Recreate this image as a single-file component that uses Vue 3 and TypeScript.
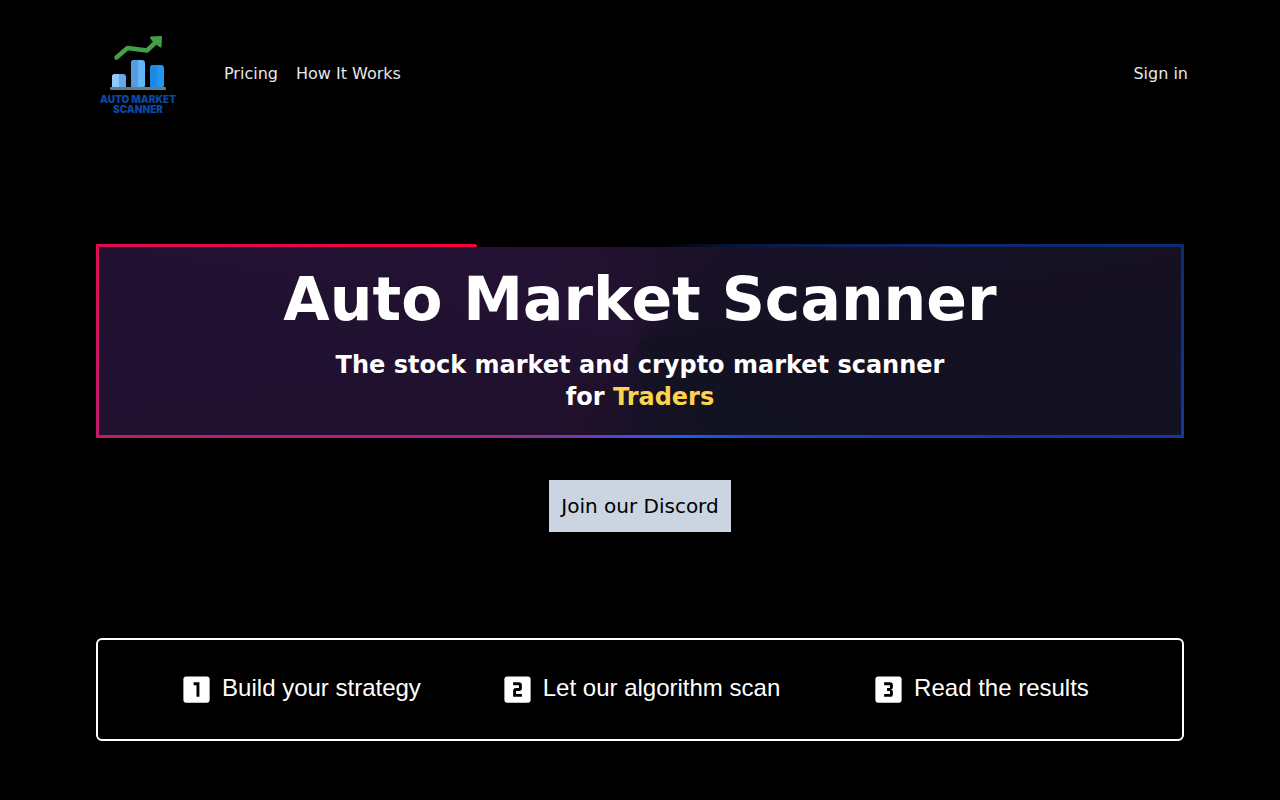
<script setup lang="ts">
interface Step {
  id: number
  label: string
  digit: string
}

const steps: Step[] = [
  { id: 1, label: 'Build your strategy', digit: 'M10 7h4v10h-2V9h-2z' },
  { id: 2, label: 'Let our algorithm scan', digit: 'M9 7h4a2 2 0 0 1 2 2v2a2 2 0 0 1-2 2h-2v2h4v2H9v-4a2 2 0 0 1 2-2h2V9H9z' },
  { id: 3, label: 'Read the results', digit: 'M9 7h4a2 2 0 0 1 2 2v1.500a1.500 1.500 0 0 1-1.500 1.500a1.500 1.500 0 0 1 1.500 1.500V15a2 2 0 0 1-2 2H9v-2h4v-2h-2v-2h2V9H9z' },
]
</script>

<template>
  <div class="page">
    <header class="header">
      <a class="brand" href="#" aria-label="Auto Market Scanner">
        <svg class="logo" viewBox="0 0 100 100" aria-hidden="true">
          <rect x="24" y="50" width="14" height="15" rx="3" fill="#64a9ee" />
          <path d="M27 50h4v15h-7V53a3 3 0 0 1 3-3z" fill="#93c8fa" />
          <rect x="43" y="36" width="14" height="28" rx="3" fill="#64b5f6" />
          <path d="M46 36h4v28h-7V39a3 3 0 0 1 3-3z" fill="#569bdf" />
          <rect x="62" y="41" width="14" height="23" rx="3" fill="#2196f3" />
          <path d="M65 41h4v23h-7V44a3 3 0 0 1 3-3z" fill="#1e88e5" />
          <rect x="22" y="63" width="56" height="3" rx="1" fill="#607d8b" />
          <path d="M28.500 33.500L39.500 24L59 26.500L68 18" fill="none" stroke="#43a047" stroke-width="4.500" stroke-linecap="round" stroke-linejoin="round" />
          <path d="M63 13.500L73 13L72.500 22.500L69 20L64.500 16z" fill="#43a047" stroke="#43a047" stroke-width="2" stroke-linejoin="round" />
          <text x="50" y="79" class="logo-text">AUTO MARKET</text>
          <text x="50" y="89" class="logo-text">SCANNER</text>
        </svg>
      </a>
      <nav class="nav" aria-label="Main">
        <a href="#pricing">Pricing</a>
        <a href="#how">How It Works</a>
      </nav>
      <a class="signin" href="#signin">Sign in</a>
    </header>

    <main>
      <section class="hero">
        <h1>Auto Market Scanner</h1>
        <p>The stock market and crypto market scanner for <span class="accent">Traders</span></p>
      </section>
      <div class="cta">
        <button type="button">Join our Discord</button>
      </div>
      <ol id="how" class="steps">
        <li v-for="step in steps" :key="step.id">
          <svg viewBox="0 0 24 24" aria-hidden="true">
            <rect x="3" y="3" width="18" height="18" rx="2" fill="#fff" />
            <path :d="step.digit" fill="#000" />
          </svg>
          <span>{{ step.label }}</span>
        </li>
      </ol>
    </main>
  </div>
</template>

<style>
body {
  margin: 0;
  background: #000;
}
</style>

<style scoped>
.page {
  max-width: 1088px;
  margin: 0 auto;
  padding: 24px 32px 56px;
  color: #fff;
  font-family: "DejaVu Sans", sans-serif;
}
.header {
  display: flex;
  align-items: center;
  font-size: 16px;
  line-height: 24px;
}
.header a {
  color: #e5e7eb;
  text-decoration: none;
}
.brand,
.logo {
  display: block;
  width: 100px;
  height: 100px;
}
.brand {
  margin-left: -8px;
}
.logo-text {
  fill: #0d47a1;
  font-family: Inter, "Liberation Sans", sans-serif;
  font-size: 10px;
  font-weight: 900;
  text-anchor: middle;
}
.nav {
  display: flex;
  gap: 18px;
  margin-left: 36px;
}
.signin {
  margin-left: auto;
  margin-right: -4px;
}
.hero {
  margin-top: 120px;
  padding: 20px 20px 22px;
  border: 3px solid;
  border-image: conic-gradient(from 300.5deg, #000 20%, #1e5cff 60%, #ff0033) 1;
  background: conic-gradient(from 300deg, #241133, #22112e 12%, #1e112b 20%, #191128 30%, #141122 42%, #121220 52%, #161226 65%, #20102a 76%, #201130 90%, #241133);
  text-align: center;
}
h1 {
  margin: 2px 0 20px;
  font-size: 60px;
  line-height: 60px;
  font-weight: 700;
}
.hero p {
  max-width: 640px;
  margin: 0 auto;
  font-size: 24px;
  line-height: 32px;
  font-weight: 700;
}
.accent {
  color: #fcd34d;
}
.cta {
  display: flex;
  justify-content: center;
  margin: 42px 0 106px;
}
button {
  padding: 12px;
  border: 0;
  background: #cbd5e1;
  color: #000;
  font: 20px/28px "DejaVu Sans", sans-serif;
}
.steps {
  display: grid;
  grid-template-columns: repeat(3, 1fr);
  margin: 0;
  padding: 32px;
  border: 2px solid #fff;
  border-radius: 6px;
  list-style: none;
  font: 24px/32px "Liberation Sans", Arial, sans-serif;
}
.steps li {
  display: flex;
  justify-content: center;
  align-items: flex-start;
  gap: 8px;
}
.steps svg {
  width: 35px;
  height: 35px;
}
</style>
